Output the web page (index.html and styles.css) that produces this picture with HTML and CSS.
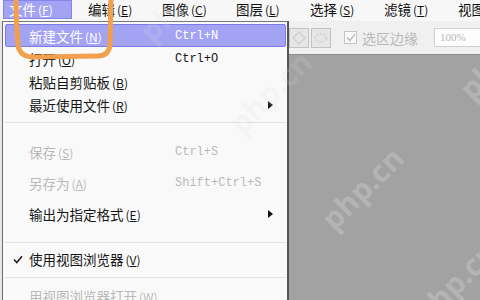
FILE: index.html
```html
<!DOCTYPE html>
<html lang="zh-CN">
<head>
	<meta charset="UTF-8">
	<title>文件菜单</title>
	<link rel="stylesheet" href="styles.css">
</head>
<body>
	<div class="app">
		<div class="menubar">
			<span class="mb-item on">文件<span class="key">(<u>F</u>)</span></span>
			<span class="mb-item">编辑<span class="key">(<u>E</u>)</span></span>
			<span class="mb-item">图像<span class="key">(<u>C</u>)</span></span>
			<span class="mb-item">图层<span class="key">(<u>L</u>)</span></span>
			<span class="mb-item">选择<span class="key">(<u>S</u>)</span></span>
			<span class="mb-item">滤镜<span class="key">(<u>T</u>)</span></span>
			<span class="mb-item last">视图</span>
		</div>
		<div class="main">
			<div class="edge"></div>
			<div class="dropdown">
				<div class="row h23 hl"><span class="ico"></span><span class="lbl">新建文件<span class="key">(<u>N</u>)</span></span><span class="sc">Ctrl+N</span></div>
				<div class="row h23"><span class="ico"></span><span class="lbl">打开<span class="key">(<u>O</u>)</span></span><span class="sc">Ctrl+O</span></div>
				<div class="row h23"><span class="ico"></span><span class="lbl">粘贴自剪贴板<span class="key">(<u>B</u>)</span></span></div>
				<div class="row h23"><span class="ico"></span><span class="lbl">最近使用文件<span class="key">(<u>R</u>)</span></span><span class="arr"></span></div>
				<div class="sep sep1"></div>
				<div class="row h31 off"><span class="ico"></span><span class="lbl">保存<span class="key">(<u>S</u>)</span></span><span class="sc">Ctrl+S</span></div>
				<div class="row h31 off"><span class="ico"></span><span class="lbl">另存为<span class="key">(<u>A</u>)</span></span><span class="sc">Shift+Ctrl+S</span></div>
				<div class="row h31"><span class="ico"></span><span class="lbl">输出为指定格式<span class="key">(<u>E</u>)</span></span><span class="arr"></span></div>
				<div class="sep sep2"></div>
				<div class="row h22"><span class="ico">
					<svg width="10" height="9" viewBox="0 0 10 9"><path d="M1 4.5 L3.8 7.5 L9 1.2" fill="none" stroke="#222" stroke-width="1.6"/></svg>
				</span><span class="lbl">使用视图浏览器<span class="key">(<u>V</u>)</span></span></div>
				<div class="sep sep3"></div>
				<div class="row h22 off"><span class="ico"></span><span class="lbl">用视图浏览器打开<span class="key">(<u>W</u>)</span></span></div>
			</div>
			<div class="work">
				<div class="toolbar">
					<span class="tbtn">
						<svg width="14" height="14" viewBox="0 0 14 14"><path d="M7 1 L13 7 L7 13 L1 7 Z" fill="none" stroke="#cfcfcf" stroke-width="1.4"/></svg>
					</span>
					<span class="tbtn">
						<svg width="14" height="14" viewBox="0 0 14 14"><ellipse cx="7" cy="7" rx="5.5" ry="4" fill="none" stroke="#cfcfcf" stroke-width="1.4" stroke-dasharray="2 1.5"/></svg>
					</span>
					<span class="chk">
						<svg width="10" height="9" viewBox="0 0 10 9"><path d="M1 4.5 L3.8 7.5 L9 1.2" fill="none" stroke="#bdbdbd" stroke-width="1.5"/></svg>
					</span>
					<span class="chk-lbl">选区边缘</span>
					<span class="zoom-box">100%</span>
				</div>
				<div class="canvas"></div>
			</div>
		</div>

		<svg class="mark" width="130" height="64" viewBox="0 0 130 64">
			<path d="M16 -3 C16 14 17 34 18 45 C19 53 24 57 34 57 L98 56 C106 56 110 51 110 43 L111 -3" fill="none" stroke="#f2a04e" stroke-width="5" stroke-linecap="round"/>
		</svg>

		<span class="wm" style="left: 362px; top: 188px;">php.cn</span>
		<span class="wm faint" style="left: 270px; top: 92px;">php.cn</span>
		<span class="wm" style="left: 455px; top: 282px;">php.cn</span>
		<span class="wm" style="left: 500px; top: 58px;">php.cn</span>
		<span class="wm faint" style="left: 180px; top: 0px;">php.cn</span>
	</div>
</body>
</html>
```

FILE: styles.css
```css
body {
	margin: 0;
	font-family: "Noto Sans CJK SC", "DejaVu Sans", sans-serif;
}

.app {
	width: 480px;
	height: 300px;
	position: relative;
	overflow: hidden;
	display: flex;
	flex-direction: column;
	background: #a2a2a2;
}

/* menu bar */
.menubar {
	height: 21px;
	flex-shrink: 0;
	display: flex;
	padding-left: 3px;
	background: #f7f7f7;
}

.mb-item {
	flex-shrink: 0;
	width: 74px;
	height: 20px;
	padding-left: 16px;
	box-sizing: border-box;
	font-size: 13.5px;
	line-height: 19px;
	color: #111;
	white-space: nowrap;
}

.mb-item.last {
	width: 22px;
	overflow: hidden;
	padding-left: 0;
	margin-left: 16px;
}

.mb-item.on {
	width: 69px;
	padding-left: 5px;
	background: #a3a3f4;
	border: 1px solid #8585ea;
	line-height: 17px;
	height: 19px;
	color: #fff;
}

.key {
	font-size: 12px;
	margin-left: 2px;
}

/* main area */
.main {
	flex: 1;
	display: flex;
	min-height: 0;
}

.edge {
	width: 2px;
	background: #e6e6e6;
}

.dropdown {
	width: 287px;
	box-sizing: border-box;
	padding: 2px 1px 0 2px;
	background: #f9f9f9;
	border-top: 1px solid #777;
	border-left: 1px solid #6c6c6c;
	border-right: 2px solid #555;
	overflow: hidden;
	flex-shrink: 0;
}

.row {
	display: flex;
	align-items: center;
	box-sizing: border-box;
	padding-left: 7px;
	border: 1px solid transparent;
	font-size: 13.5px;
	color: #151515;
	white-space: nowrap;
}

.h23 { height: 23px; }
.h31 { height: 31px; }
.h22 { height: 22px; }

.row.hl {
	background: #a3a3f4;
	border-color: #7c7ce9;
	border-radius: 2px;
	color: #fff;
}

.row.off {
	color: #b9b9b9;
}

.ico {
	width: 16px;
	display: flex;
	align-items: center;
}

.lbl {
	width: 146px;
}

.sc {
	font-family: "Liberation Mono", monospace;
	font-size: 12px;
}

.arr {
	margin-left: auto;
	margin-right: 12px;
	width: 0;
	height: 0;
	border-left: 5px solid #111;
	border-top: 4px solid transparent;
	border-bottom: 4px solid transparent;
}

.sep {
	height: 1px;
	background: #e2e2e2;
}

.sep1 { margin: 6px 0 13px; }
.sep2 { margin: 13px 0 5px; }
.sep3 { margin: 7px 0 7px; }

/* right work area */
.work {
	flex: 1;
	min-width: 0;
	display: flex;
	flex-direction: column;
	overflow: hidden;
}

.toolbar {
	height: 33px;
	flex-shrink: 0;
	display: flex;
	align-items: center;
	gap: 2px;
	background: #f0f0f0;
	border-bottom: 1px solid #8c8c8c;
}

.tbtn {
	flex-shrink: 0;
	width: 20px;
	height: 20px;
	box-sizing: border-box;
	display: flex;
	align-items: center;
	justify-content: center;
	border: 1px solid #c2c2c2;
	background: #e6e6e6;
}

.chk {
	flex-shrink: 0;
	width: 13px;
	height: 13px;
	box-sizing: border-box;
	margin-left: 11px;
	display: flex;
	align-items: center;
	justify-content: center;
	border: 1px solid #c4c4c4;
	background: #fbfbfb;
}

.chk-lbl {
	flex-shrink: 0;
	margin-left: 3px;
	font-size: 14px;
	color: #b8b8b8;
	white-space: nowrap;
}

.zoom-box {
	flex-shrink: 0;
	margin-left: 14px;
	width: 60px;
	height: 19px;
	box-sizing: border-box;
	padding-left: 5px;
	border: 1px solid #d0d0d0;
	background: #fdfdfd;
	font-family: "Liberation Serif", serif;
	font-size: 11px;
	line-height: 17px;
	color: #b8b8b8;
}

.canvas {
	flex: 1;
	background: #a2a2a2;
}

/* overlays */
.mark {
	position: absolute;
	left: 0;
	top: 0;
}

.wm {
	position: absolute;
	transform: translate(-50%, -50%) rotate(-45deg);
	font-family: "Open Sans", "DejaVu Sans", sans-serif;
	font-weight: bold;
	font-size: 30px;
	color: rgba(222, 222, 222, 0.32);
	white-space: nowrap;
	pointer-events: none;
}

.wm.faint {
	color: rgba(222, 222, 222, 0.18);
}
```
